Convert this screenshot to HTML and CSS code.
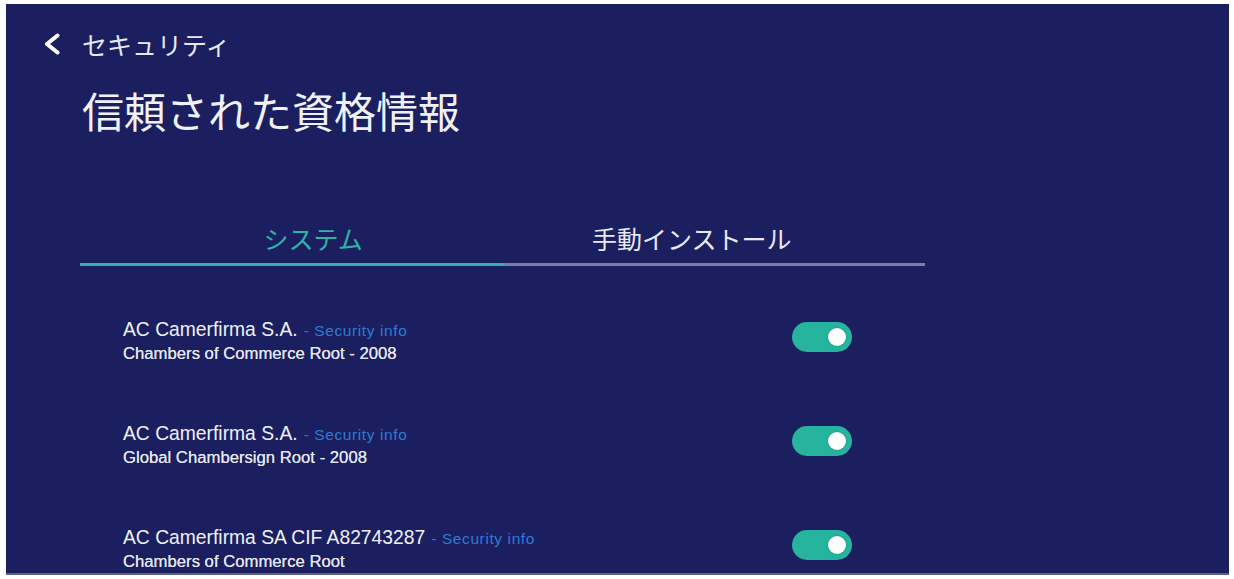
FILE: index.html
```html
<!DOCTYPE html>
<html lang="ja">
<head>
<meta charset="utf-8">
<title>信頼された資格情報</title>
<link rel="stylesheet" href="styles.css">
</head>
<body>
<div class="screen">
  <div class="topbar">
    <svg class="back" width="18" height="22" viewBox="0 0 18 22" aria-hidden="true">
      <polyline points="14.5,2.5 4,11 14.5,19.5" fill="none" stroke="#ffffff" stroke-width="4" stroke-linecap="round" stroke-linejoin="round"/>
    </svg>
    <span class="crumb">セキュリティ</span>
  </div>
  <h1 class="title">信頼された資格情報</h1>
  <div class="tabs">
    <div class="tab active"><span class="tab-label">システム</span></div>
    <div class="tab"><span class="tab-label">手動インストール</span></div>
  </div>
  <div class="list">
    <div class="row">
      <div class="info">
        <div class="name">AC Camerfirma S.A.<span class="sec">- Security info</span></div>
        <div class="sub">Chambers of Commerce Root - 2008</div>
      </div>
      <div class="toggle on"><span class="knob"></span></div>
    </div>
    <div class="row">
      <div class="info">
        <div class="name">AC Camerfirma S.A.<span class="sec">- Security info</span></div>
        <div class="sub">Global Chambersign Root - 2008</div>
      </div>
      <div class="toggle on"><span class="knob"></span></div>
    </div>
    <div class="row">
      <div class="info">
        <div class="name">AC Camerfirma SA CIF A82743287<span class="sec">- Security info</span></div>
        <div class="sub">Chambers of Commerce Root</div>
      </div>
      <div class="toggle on"><span class="knob"></span></div>
    </div>
  </div>
</div>
</body>
</html>
```
FILE: styles.css
```css
html, body {
  margin: 0;
  padding: 0;
  background: #ffffff;
}

.screen {
  margin: 4px 5px 0 6px;
  height: 571px;
  background: #1b1f5f;
  border-bottom: 2px solid #5d6080;
  overflow: hidden;
  font-family: "Liberation Sans", Arial, sans-serif;
  color: #eceef6;
  box-sizing: border-box;
}

.topbar {
  display: flex;
  align-items: center;
  height: 26px;
  padding: 27px 0 0 37px;
  gap: 21px;
}

.back {
  display: block;
  flex: none;
}

.crumb {
  font-family: "Noto Sans CJK JP", sans-serif;
  font-size: 25px;
  line-height: 26px;
  color: #e6e8f2;
}

.title {
  margin: 29px 0 0 76px;
  font-family: "Noto Sans CJK JP", sans-serif;
  font-weight: 400;
  font-size: 42px;
  line-height: 48px;
  color: #f0f1f7;
}

.tabs {
  display: flex;
  width: 845px;
  margin: 89px 0 0 74px;
}

.tab {
  flex: 1;
  padding-bottom: 10px;
  border-bottom: 3px solid #7d80a0;
  font-family: "Noto Sans CJK JP", sans-serif;
  font-size: 25px;
  line-height: 30px;
  color: #e8e9f2;
  text-align: center;
}

.tab:first-child {
  padding-left: 44px;
}

.tab:last-child {
  padding-right: 44px;
}

.tab.active {
  color: #2fb3a6;
  border-bottom-color: #2db5a3;
}

.list {
  padding: 20px 0 0 117px;
  width: 729px;
}

.row {
  height: 104px;
  display: flex;
  align-items: center;
  justify-content: space-between;
}

.info {
  display: flex;
  flex-direction: column;
  margin-top: 6px;
}

.name {
  font-size: 19.3px;
  line-height: 22px;
  color: #eef0f7;
}

.sec {
  margin-left: 6px;
  font-size: 15.5px;
  letter-spacing: 0.6px;
  color: #2c7bd6;
}

.sub {
  margin-top: 2px;
  font-size: 16.7px;
  line-height: 19px;
  color: #e4e6f0;
  text-shadow: 0 0 0.6px #e4e6f0;
}

.toggle {
  width: 60px;
  height: 30px;
  border-radius: 15px;
  background: #27b49e;
  display: flex;
  align-items: center;
  justify-content: flex-end;
  padding-right: 6px;
  box-sizing: border-box;
  margin-top: -2px;
}

.knob {
  width: 18px;
  height: 18px;
  border-radius: 50%;
  background: #ffffff;
  box-shadow: 0 0 2px rgba(0, 0, 0, 0.25);
}
```
